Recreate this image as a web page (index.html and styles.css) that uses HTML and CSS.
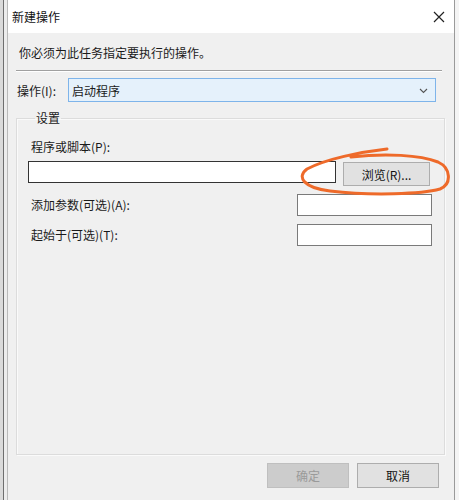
FILE: index.html
```html
<!DOCTYPE html>
<html lang="zh-CN">
<head>
<meta charset="utf-8">
<title>新建操作</title>
<link rel="stylesheet" href="styles.css">
</head>
<body>
<div class="screen">
  <div class="behind"></div>
  <div class="dialog">
    <div class="titlebar">
      <span class="title">新建操作</span>
      <svg class="close" width="12" height="12" viewBox="0 0 12 12"><path d="M1 1L11 11M11 1L1 11" stroke="#222" stroke-width="1.2" fill="none"/></svg>
    </div>
    <div class="content">
      <p class="intro">你必须为此任务指定要执行的操作。</p>
      <div class="separator"></div>
      <div class="action-row">
        <span class="label">操作(I):</span>
        <div class="combo">
          <span>启动程序</span>
          <svg class="chev" width="9" height="6" viewBox="0 0 9 6"><path d="M1 1L4.5 4.5L8 1" stroke="#555" stroke-width="1.1" fill="none"/></svg>
        </div>
      </div>
      <fieldset class="group">
        <legend>设置</legend>
        <div class="field-label">程序或脚本(P):</div>
        <div class="program-row">
          <div class="textbox wide"></div>
          <button class="btn browse">浏览(R)...</button>
        </div>
        <svg class="mark" width="170" height="60" viewBox="280 140 170 60"><path d="M387 147 C360 150 326 157 307 167 C296 175 304 186 330 189 C372 194 422 192 440 187 C452 182 451 166 438 160 C420 153 386 151 351 155" stroke="#ee6a2a" stroke-width="3" fill="none" stroke-linecap="round"/></svg>
        <div class="opt-row">
          <span class="field-label">添加参数(可选)(A):</span>
          <div class="textbox small"></div>
        </div>
        <div class="opt-row">
          <span class="field-label">起始于(可选)(T):</span>
          <div class="textbox small"></div>
        </div>
      </fieldset>
      <div class="buttons">
        <button class="btn disabled">确定</button>
        <button class="btn">取消</button>
      </div>
    </div>
  </div>
  <div class="edge"></div>
</div>
</body>
</html>
```
FILE: styles.css
```css
* { box-sizing: border-box; }
html, body { margin: 0; padding: 0; }
body {
  width: 459px;
  height: 500px;
  overflow: hidden;
  font-family: "Noto Sans CJK SC", "Noto Sans", sans-serif;
  font-size: 12px;
  color: #1a1a1a;
  background: #f0f0f0;
}
.screen { display: flex; height: 500px; }
.behind {
  width: 8px;
  flex: none;
  background: #ececec;
  border-right: 1px solid #b9b9b9;
  box-shadow: inset 3px 0 0 #dadada, inset 4px 0 0 #6e6e6e;
}
.dialog {
  width: 447px;
  flex: none;
  border-right: 1px solid #9a9a9a;
  background: #f0f0f0;
  display: flex;
  flex-direction: column;
}
.edge { flex: 1; background: #f4f4f4; }
.titlebar {
  height: 33px;
  background: #fff;
  display: flex;
  align-items: center;
  justify-content: space-between;
  padding: 0 9px 0 4px;
}
.title { font-size: 12px; color: #111; }
.content { padding: 0 10px 0 7px; }
.intro { margin: 11px 0 0 4px; line-height: 18px; }
.separator {
  margin: 8px 2px 0 1px;
  border-top: 1px solid #a0a0a0;
  border-bottom: 1px solid #fff;
}
.action-row { display: flex; align-items: center; margin-top: 6px; }
.action-row .label { width: 53px; padding-left: 2px; }
.combo {
  width: 368px;
  height: 24px;
  background: #e5f1fb;
  border: 1px solid #7eb4ea;
  display: flex;
  align-items: center;
  justify-content: space-between;
  padding: 0 7px 0 3px;
}
.chev { margin-top: 1px; }
.group {
  margin: 8px 0 0 1px;
  width: 429px;
  height: 345px;
  border: 1px solid #dcdcdc;
  box-shadow: inset 1px 1px 0 #fafafa, 1px 1px 0 #fafafa;
  padding: 13px 12px 0 11px;
  position: relative;
}
.group legend { padding: 0 1px; margin-left: 7px; line-height: 16px; }
.field-label { line-height: 16px; }
.group > .field-label { margin-left: 3px; }
.program-row { display: flex; align-items: flex-start; margin-top: 6px; }
.textbox { background: #fff; height: 22px; }
.wide { width: 308px; border: 1px solid #333; }
.small { width: 135px; border: 1px solid #7a7a7a; }
.btn {
  font-family: inherit;
  font-size: 12px;
  color: #111;
  background: #e1e1e1;
  border: 1px solid #adadad;
  width: 87px;
  height: 24px;
  padding: 0;
}
.browse { margin: 1px 0 0 7px; }
.mark { position: absolute; left: 263px; top: 16px; pointer-events: none; }
.opt-row {
  display: flex;
  align-items: center;
  justify-content: space-between;
  margin-top: 8px;
  padding-left: 3px;
}
.buttons {
  display: flex;
  justify-content: flex-end;
  gap: 8px;
  margin-top: 8px;
  padding-right: 5px;
}
.buttons .btn { width: 82px; height: 25px; }
.btn.disabled { background: #cccccc; border-color: #bfbfbf; color: #9a9a9a; }
```
